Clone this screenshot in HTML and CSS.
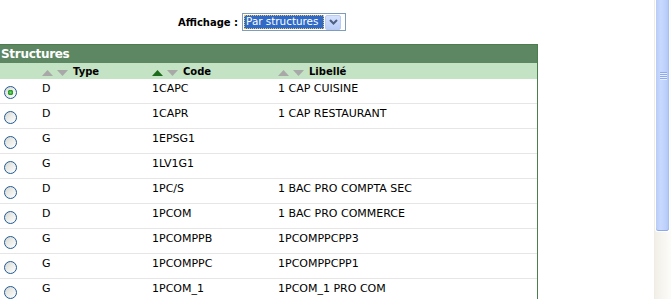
FILE: index.html
```html
<!DOCTYPE html>
<html lang="fr">
<head>
    <meta charset="UTF-8">
    <meta name="viewport" content="width=device-width, initial-scale=1.0">
    <title>Structures</title>
    <link rel="stylesheet" href="styles.css">
</head>
<body>
    <div class="page">
        <div class="content">
            <div class="toolbar">
                <span class="toolbar-label">Affichage :</span>
                <div class="select">
                    <span class="select-value">Par structures</span>
                    <span class="select-btn">
                        <svg width="9" height="6" viewBox="0 0 9 6"><path d="M1 1 L4.5 4.5 L8 1" fill="none" stroke="#4d6185" stroke-width="2"/></svg>
                    </span>
                </div>
            </div>

            <div class="panel">
                <div class="panel-title">Structures</div>
                <table class="grid">
                    <colgroup>
                        <col class="col-radio">
                        <col class="col-type">
                        <col class="col-code">
                        <col>
                    </colgroup>
                    <thead>
                        <tr>
                            <th></th>
                            <th><span class="sort"><svg class="arrow" viewBox="0 0 11 6"><path d="M0 6 L5.5 0 L11 6Z"/></svg><svg class="arrow" viewBox="0 0 11 6"><path d="M0 0 L11 0 L5.5 6Z"/></svg></span>Type</th>
                            <th><span class="sort"><svg class="arrow active" viewBox="0 0 11 6"><path d="M0 6 L5.5 0 L11 6Z"/></svg><svg class="arrow" viewBox="0 0 11 6"><path d="M0 0 L11 0 L5.5 6Z"/></svg></span>Code</th>
                            <th><span class="sort"><svg class="arrow" viewBox="0 0 11 6"><path d="M0 6 L5.5 0 L11 6Z"/></svg><svg class="arrow" viewBox="0 0 11 6"><path d="M0 0 L11 0 L5.5 6Z"/></svg></span>Libellé</th>
                        </tr>
                    </thead>
                    <tbody>
                        <tr><td class="cell-radio"><input type="radio" name="structure" checked></td><td>D</td><td>1CAPC</td><td>1 CAP CUISINE</td></tr>
                        <tr><td class="cell-radio"><input type="radio" name="structure"></td><td>D</td><td>1CAPR</td><td>1 CAP RESTAURANT</td></tr>
                        <tr><td class="cell-radio"><input type="radio" name="structure"></td><td>G</td><td>1EPSG1</td><td></td></tr>
                        <tr><td class="cell-radio"><input type="radio" name="structure"></td><td>G</td><td>1LV1G1</td><td></td></tr>
                        <tr><td class="cell-radio"><input type="radio" name="structure"></td><td>D</td><td>1PC/S</td><td>1 BAC PRO COMPTA SEC</td></tr>
                        <tr><td class="cell-radio"><input type="radio" name="structure"></td><td>D</td><td>1PCOM</td><td>1 BAC PRO COMMERCE</td></tr>
                        <tr><td class="cell-radio"><input type="radio" name="structure"></td><td>G</td><td>1PCOMPPB</td><td>1PCOMPPCPP3</td></tr>
                        <tr><td class="cell-radio"><input type="radio" name="structure"></td><td>G</td><td>1PCOMPPC</td><td>1PCOMPPCPP1</td></tr>
                        <tr><td class="cell-radio"><input type="radio" name="structure"></td><td>G</td><td>1PCOM_1</td><td>1PCOM_1 PRO COM</td></tr>
                    </tbody>
                </table>
            </div>
        </div>

        <div class="scrollbar">
            <div class="thumb"><span class="grip"></span></div>
        </div>
    </div>
</body>
</html>
```

FILE: styles.css
```css
:root {
    --header-color: #5d8762;
    --subheader-color: #c4e2c4;
    --border-color: #4c7d4c;
    --row-line: #e6e6e6;
}
body {
    margin: 0;
    padding: 0;
    background: #fff;
    color: #000;
    font-family: "DejaVu Sans", Verdana, sans-serif;
    overflow: hidden;
}
.page {
    display: flex;
    height: 299px;
}
.content {
    flex: 1;
    overflow: hidden;
}

/* affichage selector */
.toolbar {
    height: 44px;
    display: flex;
    align-items: center;
    gap: 4px;
    padding-left: 178px;
}
.toolbar-label {
    font-size: 10px;
    font-weight: bold;
    padding-top: 1px;
}
.select {
    display: flex;
    align-items: center;
    width: 100px;
    height: 16px;
    border: 1px solid #7f9db9;
    padding: 0 1px;
}
.select-value {
    width: 80px;
    height: 14px;
    line-height: 13px;
    box-sizing: border-box;
    background: #316ac5;
    color: #fff;
    font-size: 10.4px;
    padding-left: 2px;
    outline: 1px dotted #e6c45a;
    outline-offset: -1px;
    white-space: nowrap;
    overflow: hidden;
}
.select-btn {
    width: 16px;
    height: 15px;
    margin-left: 1px;
    box-sizing: border-box;
    border: 1px solid #b7cbf4;
    border-radius: 2px;
    background: linear-gradient(#d6e2fd, #b9cdf8);
    display: flex;
    align-items: center;
    justify-content: center;
}

/* structures panel */
.panel {
    width: 537px;
    border-top: 1px solid var(--border-color);
    border-right: 1px solid var(--border-color);
}
.panel-title {
    height: 18px;
    line-height: 18px;
    background: var(--header-color);
    color: #fff;
    font-size: 12px;
    font-weight: bold;
    letter-spacing: -0.3px;
    padding-left: 1px;
}
.grid {
    width: 100%;
    table-layout: fixed;
    border-collapse: separate;
    border-spacing: 0;
}
.col-radio {
    width: 42px;
}
.col-type {
    width: 110px;
}
.col-code {
    width: 126px;
}
.grid th {
    height: 16px;
    padding: 0;
    background: var(--subheader-color);
    text-align: left;
    font-size: 10px;
    font-weight: bold;
    white-space: nowrap;
}
.sort {
    display: inline-flex;
    gap: 4px;
    margin-right: 5px;
    vertical-align: -1px;
}
.arrow {
    width: 11px;
    height: 6px;
    fill: #a8a8a8;
}
.arrow.active {
    fill: #1c6b1c;
}
.grid td {
    height: 21px;
    padding: 3px 0 0;
    vertical-align: top;
    font-size: 11px;
    line-height: 13px;
    border-bottom: 1px solid var(--row-line);
    white-space: nowrap;
}
.grid td.cell-radio {
    height: 17px;
    padding-top: 7px;
}
.cell-radio input {
    -webkit-appearance: none;
    appearance: none;
    display: block;
    width: 13px;
    height: 13px;
    margin: 0 0 0 4px;
    border: 1px solid #1f5a96;
    border-radius: 50%;
    box-sizing: border-box;
    background: linear-gradient(135deg, #d6d6d0 0%, #ededea 50%, #fff 100%);
}
.cell-radio input:checked {
    background:
        radial-gradient(circle at 50% 50%, #7ad67a 0, #28a428 2px, #1e8a1e 2.6px, transparent 3px),
        linear-gradient(135deg, #d6d6d0 0%, #ededea 50%, #fff 100%);
}

/* window scrollbar */
.scrollbar {
    flex: none;
    width: 17px;
    box-sizing: border-box;
    border-left: 1px solid #eeede5;
    background: linear-gradient(to right, #f1efe7, #fcfcf9);
}
.thumb {
    height: 232px;
    margin: 0 1px 0 0;
    box-sizing: border-box;
    border: 1px solid #fff;
    border-top: none;
    border-radius: 0 0 3px 3px;
    background: linear-gradient(to right, #b8ccf8, #c8d9fd 35%, #bdd0fb 75%, #aec4f4);
    box-shadow: inset 0 -1px 0 #8fa9e6, inset -1px 0 0 #a8bff1;
    padding-top: 72px;
}
.grip {
    display: block;
    width: 7px;
    height: 8px;
    margin-left: 4px;
    background: repeating-linear-gradient(#8eaaee 0 1px, #e6eeff 1px 2px);
}
```
